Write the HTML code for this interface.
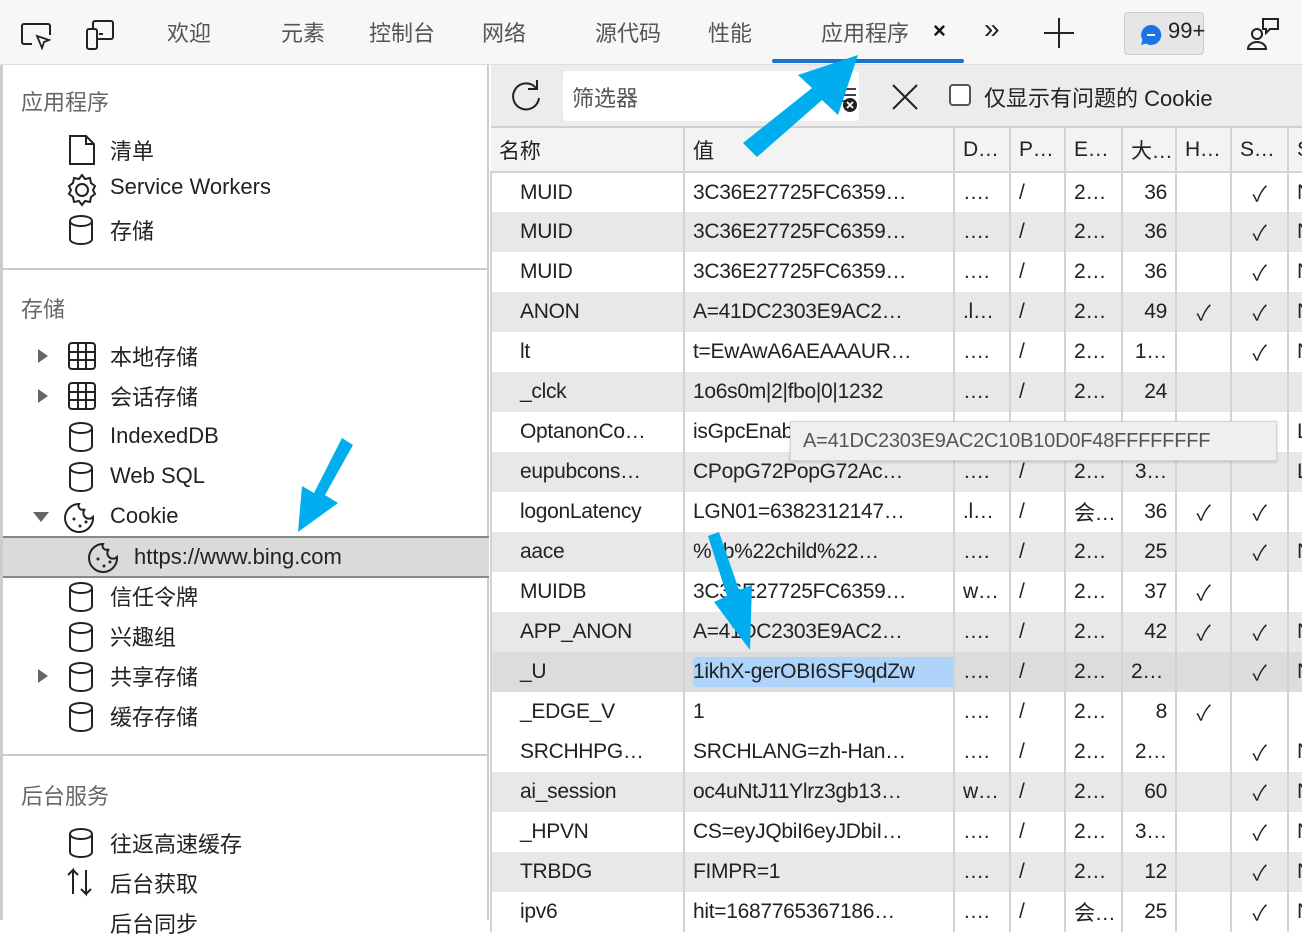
<!DOCTYPE html><html><head><meta charset="utf-8"><style>
*{margin:0;padding:0;box-sizing:border-box}
body{width:1302px;height:920px;overflow:hidden;background:#fff;font-family:"Liberation Sans","Noto Sans CJK SC",sans-serif;color:#222;position:relative}
.abs{position:absolute}
#top{left:0;top:0;width:1302px;height:65px;background:#f7f7f7;border-bottom:1px solid #ddd}
.tab{position:absolute;top:16px;font-size:22px;color:#555}
#side{left:0;top:65px;width:489px;height:855px;border-left:3px solid #ccc;border-right:2px solid #ccc}
.sh{position:absolute;left:18px;font-size:22px;color:#666}
.si{position:absolute;font-size:22px;color:#222;white-space:nowrap}
.sep{position:absolute;left:0;width:486px;height:2px;background:#ccc}
.ic{position:absolute}
#fbar{left:491px;top:65px;width:811px;height:63px;background:#ececec;border-bottom:2px solid #d0d0d0}
table{position:absolute;left:490px;top:128px;width:837px;border-collapse:collapse;table-layout:fixed;font-size:21px;letter-spacing:-0.3px}
td,th{height:40px;border-left:2px solid #d3d3d3;padding:0 8px;white-space:nowrap;overflow:hidden;font-weight:normal;text-align:left;color:#222}
th{height:44px;border-bottom:2px solid #d3d3d3;background:#f3f3f3}
tr.g td{background:#e8e8e8}
td.r{text-align:right}
td.c{text-align:center}
td.n{padding-left:28px}
</style></head><body>
<div id="top" class="abs">
<svg class="ic" style="left:20px;top:22px" width="34" height="30" viewBox="0 0 34 30"><path d="M12 22H4a2 2 0 0 1-2-2V4a2 2 0 0 1 2-2h24a2 2 0 0 1 2 2v9" fill="none" stroke="#222" stroke-width="2"/><path d="M17 14l12 4-5 2-2 6z" fill="none" stroke="#222" stroke-width="1.8"/></svg>
<svg class="ic" style="left:84px;top:19px" width="34" height="34" viewBox="0 0 34 34"><rect x="3" y="10" width="10" height="20" rx="2" fill="none" stroke="#222" stroke-width="2"/><path d="M9 10V4a2 2 0 0 1 2-2h16a2 2 0 0 1 2 2v14a2 2 0 0 1-2 2H13" fill="none" stroke="#222" stroke-width="2"/><path d="M15 15h4" stroke="#222" stroke-width="2"/></svg>
<div class="tab" style="left:167px">欢迎</div>
<div class="tab" style="left:281px">元素</div>
<div class="tab" style="left:369px">控制台</div>
<div class="tab" style="left:482px">网络</div>
<div class="tab" style="left:595px">源代码</div>
<div class="tab" style="left:708px">性能</div>
<div class="tab" style="left:821px">应用程序</div>
<div class="tab" style="left:933px;color:#111;font-weight:bold;top:18px">×</div>
<div class="abs" style="left:772px;top:59px;width:192px;height:4px;background:#1a73d0;border-radius:2px"></div>
<div class="tab" style="left:984px;color:#222;font-size:28px;top:13px">»</div>
<svg class="ic" style="left:1042px;top:16px" width="34" height="34"><path d="M17 2v30M2 17h30" stroke="#222" stroke-width="2"/></svg>
<div class="abs" style="left:1124px;top:12px;width:80px;height:43px;background:#e6e6e6;border:1px solid #ccc;border-radius:4px"></div>
<svg class="ic" style="left:1140px;top:24px" width="22" height="22"><path d="M11 1a10 10 0 1 1-5 18.5L1 21l1.5-5A10 10 0 0 1 11 1z" fill="#1a73e8"/><path d="M7 11h8" stroke="#fff" stroke-width="2"/></svg>
<div class="abs" style="left:1168px;top:18px;font-size:22px">99+</div>
<svg class="ic" style="left:1246px;top:16px" width="36" height="36" viewBox="0 0 36 36"><circle cx="11" cy="18" r="5" fill="none" stroke="#222" stroke-width="2"/><path d="M2 33a9 7 0 0 1 18 0z" fill="none" stroke="#222" stroke-width="2"/><path d="M17 3h15v10h-8l-4 4v-4h-3z" fill="none" stroke="#222" stroke-width="2"/></svg>
</div>

<div id="side" class="abs">
<div class="sh" style="top:20px">应用程序</div>
<div class="si" style="left:107px;top:69px">清单</div>
<div class="si" style="left:107px;top:109px">Service Workers</div>
<div class="si" style="left:107px;top:149px">存储</div>
<div class="sep" style="top:203px"></div>
<div class="sh" style="top:227px">存储</div>
<div class="si" style="left:107px;top:275px">本地存储</div>
<div class="si" style="left:107px;top:315px">会话存储</div>
<div class="si" style="left:107px;top:358px">IndexedDB</div>
<div class="si" style="left:107px;top:398px">Web SQL</div>
<div class="si" style="left:107px;top:438px">Cookie</div>
<div class="abs" style="left:0;top:471px;width:486px;height:42px;background:#dadada;border-top:2px solid #888;border-bottom:2px solid #888"></div>
<div class="si" style="left:131px;top:479px">https://www.bing.com</div>
<div class="si" style="left:107px;top:515px">信任令牌</div>
<div class="si" style="left:107px;top:555px">兴趣组</div>
<div class="si" style="left:107px;top:595px">共享存储</div>
<div class="si" style="left:107px;top:635px">缓存存储</div>
<div class="sep" style="top:689px"></div>
<div class="sh" style="top:714px">后台服务</div>
<div class="si" style="left:107px;top:762px">往返高速缓存</div>
<div class="si" style="left:107px;top:802px">后台获取</div>
<div class="si" style="left:107px;top:842px">后台同步</div>
</div>
<svg class="abs" style="left:0;top:0" width="489" height="920">
<g fill="none" stroke="#222" stroke-width="2">
<path d="M70 136h16l8 8v20H70z M86 136v8h8"/>
<circle cx="82" cy="190" r="6"/><path d="M82 175l3 4 5-1 1 5 4 3-2 4 2 4-4 3-1 5-5-1-3 4-3-4-5 1-1-5-4-3 2-4-2-4 4-3 1-5 5 1z"/>
</g>
<g fill="none" stroke="#222" stroke-width="2" id="cyl">
<path d="M70 221v18c0 3 5 5 11 5s11-2 11-5v-18M70 221c0-3 5-5 11-5s11 2 11 5-5 5-11 5-11-2-11-5"/>
</g>
<use href="#cyl" y="207"/><use href="#cyl" y="247"/><use href="#cyl" y="367"/><use href="#cyl" y="407"/><use href="#cyl" y="447"/><use href="#cyl" y="487"/><use href="#cyl" y="613"/>
<g fill="none" stroke="#222" stroke-width="2"><rect x="69" y="343" width="26" height="26" rx="3"/><path d="M78 343v26M86 343v26M69 352h26M69 360h26"/><rect x="69" y="383" width="26" height="26" rx="3"/><path d="M78 383v26M86 383v26M69 392h26M69 400h26"/></g>
<path d="M38 349l10 7-10 7zM38 389l10 7-10 7zM38 669l10 7-10 7z" fill="#666"/>
<path d="M33 512h16l-8 10z" fill="#666"/>
<g transform="translate(0,8)">
<g fill="none" stroke="#222" stroke-width="2"><path d="M93 509a14 14 0 1 1-14-13 4 4 0 0 0 6 5 4 4 0 0 0 8 8z"/><path d="M117 549a14 14 0 1 1-14-13 4 4 0 0 0 6 5 4 4 0 0 0 8 8z"/></g>
<g fill="#222"><circle cx="74" cy="511" r="1.5"/><circle cx="80" cy="518" r="1.5"/><circle cx="86" cy="514" r="1.5"/><circle cx="98" cy="551" r="1.5"/><circle cx="104" cy="558" r="1.5"/><circle cx="110" cy="554" r="1.5"/></g>
</g>
<path d="M73 894v-24l-5 5M73 870l5 5M86 870v24l-5-5M86 894l5-5" fill="none" stroke="#222" stroke-width="2"/>
</svg>

<div id="fbar" class="abs">
<svg class="ic" style="left:17px;top:13px" width="36" height="36"><path d="M28 10A13 13 0 1 0 31 20" fill="none" stroke="#222" stroke-width="2"/><path d="M29 2v9h-9" fill="none" stroke="#222" stroke-width="2"/></svg>
<div class="abs" style="left:72px;top:6px;width:296px;height:50px;background:#fff;border-radius:4px"></div>
<div class="abs" style="left:81px;top:16px;font-size:22px;color:#555">筛选器</div>
<svg class="ic" style="left:347px;top:20px" width="22" height="28"><path d="M2 4h16M2 10h16M2 16h10" stroke="#444" stroke-width="2"/><circle cx="12" cy="20" r="7" fill="#222"/><path d="M9 17l6 6M15 17l-6 6" stroke="#fff" stroke-width="1.8"/></svg>
<svg class="ic" style="left:400px;top:18px" width="28" height="28"><path d="M2 2l24 24M26 2L2 26" stroke="#222" stroke-width="2"/></svg>
<div class="abs" style="left:458px;top:19px;width:22px;height:22px;border:2px solid #555;border-radius:4px;background:#fff"></div>
<div class="abs" style="left:493px;top:16px;font-size:22px;color:#222">仅显示有问题的 Cookie</div>
</div>

<table>
<colgroup><col style="width:193px"><col style="width:270px"><col style="width:56px"><col style="width:55px"><col style="width:57px"><col style="width:54px"><col style="width:55px"><col style="width:57px"><col style="width:40px"></colgroup>
<tr><th style="border-left:none">名称</th><th>值</th><th>D…</th><th>P…</th><th>E…</th><th>大…</th><th>H…</th><th>S…</th><th>S</th></tr>
<tr><td class="n">MUID</td><td>3C36E27725FC6359…</td><td>….</td><td>/</td><td>2…</td><td class="r">36</td><td></td><td class="c">✓</td><td>N</td></tr>
<tr class="g"><td class="n">MUID</td><td>3C36E27725FC6359…</td><td>….</td><td>/</td><td>2…</td><td class="r">36</td><td></td><td class="c">✓</td><td>N</td></tr>
<tr><td class="n">MUID</td><td>3C36E27725FC6359…</td><td>….</td><td>/</td><td>2…</td><td class="r">36</td><td></td><td class="c">✓</td><td>N</td></tr>
<tr class="g"><td class="n">ANON</td><td>A=41DC2303E9AC2…</td><td>.l…</td><td>/</td><td>2…</td><td class="r">49</td><td class="c">✓</td><td class="c">✓</td><td>N</td></tr>
<tr><td class="n">lt</td><td>t=EwAwA6AEAAAUR…</td><td>….</td><td>/</td><td>2…</td><td class="r">1…</td><td></td><td class="c">✓</td><td>N</td></tr>
<tr class="g"><td class="n">_clck</td><td>1o6s0m|2|fbo|0|1232</td><td>….</td><td>/</td><td>2…</td><td class="r">24</td><td></td><td></td><td></td></tr>
<tr><td class="n">OptanonCo…</td><td>isGpcEnabled</td><td></td><td></td><td></td><td></td><td></td><td></td><td>L</td></tr>
<tr class="g"><td class="n">eupubcons…</td><td>CPopG72PopG72Ac…</td><td>….</td><td>/</td><td>2…</td><td class="r">3…</td><td></td><td></td><td>L</td></tr>
<tr><td class="n">logonLatency</td><td>LGN01=6382312147…</td><td>.l…</td><td>/</td><td>会…</td><td class="r">36</td><td class="c">✓</td><td class="c">✓</td><td></td></tr>
<tr class="g"><td class="n">aace</td><td>%7b%22child%22…</td><td>….</td><td>/</td><td>2…</td><td class="r">25</td><td></td><td class="c">✓</td><td>N</td></tr>
<tr><td class="n">MUIDB</td><td>3C36E27725FC6359…</td><td>w…</td><td>/</td><td>2…</td><td class="r">37</td><td class="c">✓</td><td></td><td></td></tr>
<tr class="g"><td class="n">APP_ANON</td><td>A=41DC2303E9AC2…</td><td>….</td><td>/</td><td>2…</td><td class="r">42</td><td class="c">✓</td><td class="c">✓</td><td>N</td></tr>
<tr class="g"><td class="n" style="background:#dcdcdc">_U</td><td style="background:#dcdcdc;padding:0 0 0 8px"><span style="background:#aed4fb;display:inline-block;height:30px;line-height:30px;width:262px">1ikhX-gerOBI6SF9qdZw</span></td><td style="background:#dcdcdc">….</td><td style="background:#dcdcdc">/</td><td style="background:#dcdcdc">2…</td><td style="background:#dcdcdc">2…</td><td style="background:#dcdcdc"></td><td class="c" style="background:#dcdcdc">✓</td><td style="background:#dcdcdc">N</td></tr>
<tr><td class="n">_EDGE_V</td><td>1</td><td>….</td><td>/</td><td>2…</td><td class="r">8</td><td class="c">✓</td><td></td><td></td></tr>
<tr><td class="n">SRCHHPG…</td><td>SRCHLANG=zh-Han…</td><td>….</td><td>/</td><td>2…</td><td class="r">2…</td><td></td><td class="c">✓</td><td>N</td></tr>
<tr class="g"><td class="n">ai_session</td><td>oc4uNtJ11Ylrz3gb13…</td><td>w…</td><td>/</td><td>2…</td><td class="r">60</td><td></td><td class="c">✓</td><td>N</td></tr>
<tr><td class="n">_HPVN</td><td>CS=eyJQbiI6eyJDbiI…</td><td>….</td><td>/</td><td>2…</td><td class="r">3…</td><td></td><td class="c">✓</td><td>N</td></tr>
<tr class="g"><td class="n">TRBDG</td><td>FIMPR=1</td><td>….</td><td>/</td><td>2…</td><td class="r">12</td><td></td><td class="c">✓</td><td>N</td></tr>
<tr><td class="n">ipv6</td><td>hit=1687765367186…</td><td>….</td><td>/</td><td>会…</td><td class="r">25</td><td></td><td class="c">✓</td><td>N</td></tr>
</table>

<div class="abs" style="left:790px;top:421px;width:487px;height:40px;background:#efefef;border:1px solid #d5d5d5;box-shadow:0 1px 3px rgba(0,0,0,.2);font-size:20px;color:#555;padding:8px 0 0 12px;letter-spacing:-0.2px">A=41DC2303E9AC2C10B10D0F48FFFFFFFF</div>

<svg class="abs" style="left:0;top:0" width="1302" height="920">
<g fill="#00aeef">
<polygon points="743,143 757,157 822,100 838,115 858,55 798,75 812,88"/>
<polygon points="342,438 353,445 325,495 338,503 298,532 302,486 314,493"/>
<polygon points="708,536 719,532 739,590 752,585 750,650 714,602 727,596"/>
</g>
</svg>
</body></html>
